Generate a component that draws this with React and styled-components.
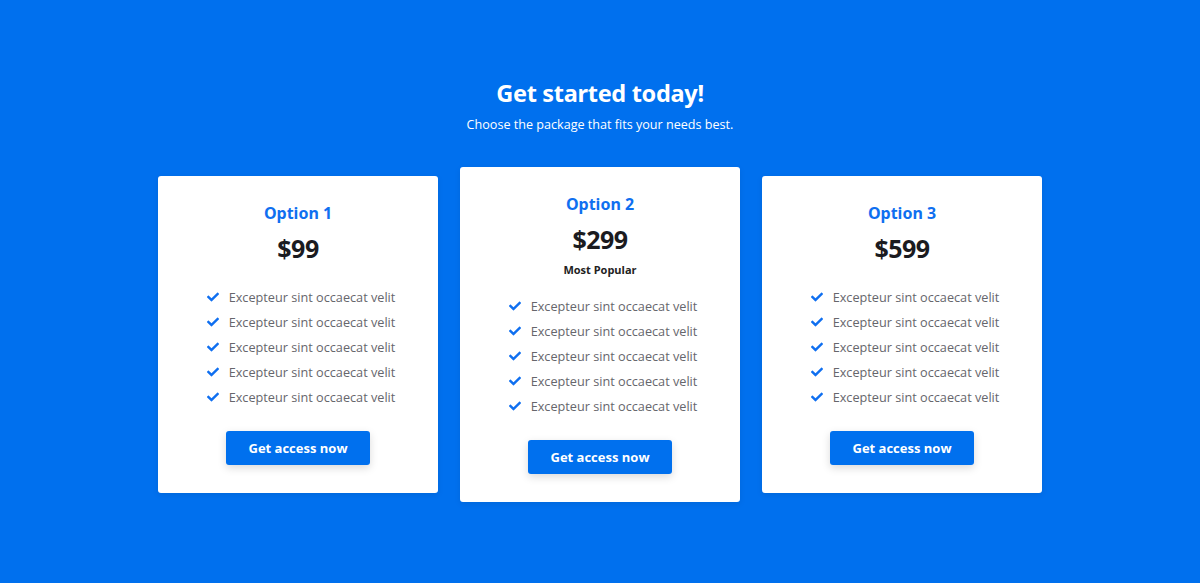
import React from 'react';
import styled, { createGlobalStyle } from 'styled-components';
import { FaCheck } from 'react-icons/fa';

const GlobalStyle = createGlobalStyle`
  body {
    margin: 0;
    background: #0070ee;
    font-family: 'Open Sans', 'Liberation Sans', sans-serif;
  }
`;

const Section = styled.section`
  height: 583px;
  box-sizing: border-box;
  background-color: #0070ee;
  padding-top: 76px;
  display: flex;
  flex-direction: column;
  align-items: center;
`;

const Title = styled.h1`
  margin: 0;
  font-family: 'Noto Sans', sans-serif;
  font-size: 23.5px;
  line-height: 34px;
  font-weight: 700;
  color: #fff;
  letter-spacing: -0.3px;
`;

const Subtitle = styled.p`
  margin: 5px 0 0;
  font-size: 12.6px;
  line-height: 20px;
  color: #fff;
`;

const Cards = styled.div`
  display: flex;
  align-items: center;
  gap: 22px;
  margin-top: 32px;
`;

const Card = styled.div`
  width: 280px;
  box-sizing: border-box;
  background: #fff;
  border-radius: 3px;
  padding: 26px 0 28px;
  display: flex;
  flex-direction: column;
  align-items: center;
  box-shadow: 0 2px 6px rgba(0, 0, 0, 0.08);
`;

const Name = styled.h3`
  margin: 0;
  font-family: 'Noto Sans', sans-serif;
  font-size: 16px;
  line-height: 22px;
  font-weight: 700;
  color: #0f6ff0;
`;

const Price = styled.div`
  margin-top: 9px;
  font-family: 'Noto Sans', sans-serif;
  font-size: 25px;
  line-height: 30px;
  font-weight: 700;
  color: #1b1b1f;
  letter-spacing: -0.5px;
`;

const Badge = styled.div`
  margin-top: 9px;
  font-size: 11px;
  line-height: 14px;
  font-weight: 700;
  color: #222;
`;

const List = styled.ul`
  list-style: none;
  margin: ${(p) => (p.$featured ? '20px' : '25px')} 0 0;
  padding: 0 0 0 6px;
  display: flex;
  flex-direction: column;
  gap: 7px;
`;

const Item = styled.li`
  display: flex;
  align-items: center;
  gap: 10px;
  font-size: 12.7px;
  line-height: 18px;
  color: #66666c;

  svg {
    color: #0f6ff0;
    width: 12px;
    height: 12px;
    flex-shrink: 0;
  }
`;

const Button = styled.button`
  margin-top: 25px;
  width: 144px;
  height: 34px;
  border: none;
  border-radius: 3px;
  background: #0070ee;
  color: #fff;
  font-family: 'Open Sans', sans-serif;
  font-size: 13px;
  font-weight: 700;
  box-shadow: 0 3px 8px rgba(0, 0, 0, 0.15);
  cursor: pointer;
`;

const plans = [
  { name: 'Option 1', price: '$99' },
  { name: 'Option 2', price: '$299', featured: true },
  { name: 'Option 3', price: '$599' },
];

const features = Array(5).fill('Excepteur sint occaecat velit');

export default function App() {
  return (
    <>
      <GlobalStyle />
      <Section>
        <Title>Get started today!</Title>
        <Subtitle>Choose the package that fits your needs best.</Subtitle>
        <Cards>
          {plans.map((plan) => (
            <Card key={plan.name}>
              <Name>{plan.name}</Name>
              <Price>{plan.price}</Price>
              {plan.featured && <Badge>Most Popular</Badge>}
              <List $featured={plan.featured}>
                {features.map((f, i) => (
                  <Item key={i}>
                    <FaCheck />
                    {f}
                  </Item>
                ))}
              </List>
              <Button>Get access now</Button>
            </Card>
          ))}
        </Cards>
      </Section>
    </>
  );
}
